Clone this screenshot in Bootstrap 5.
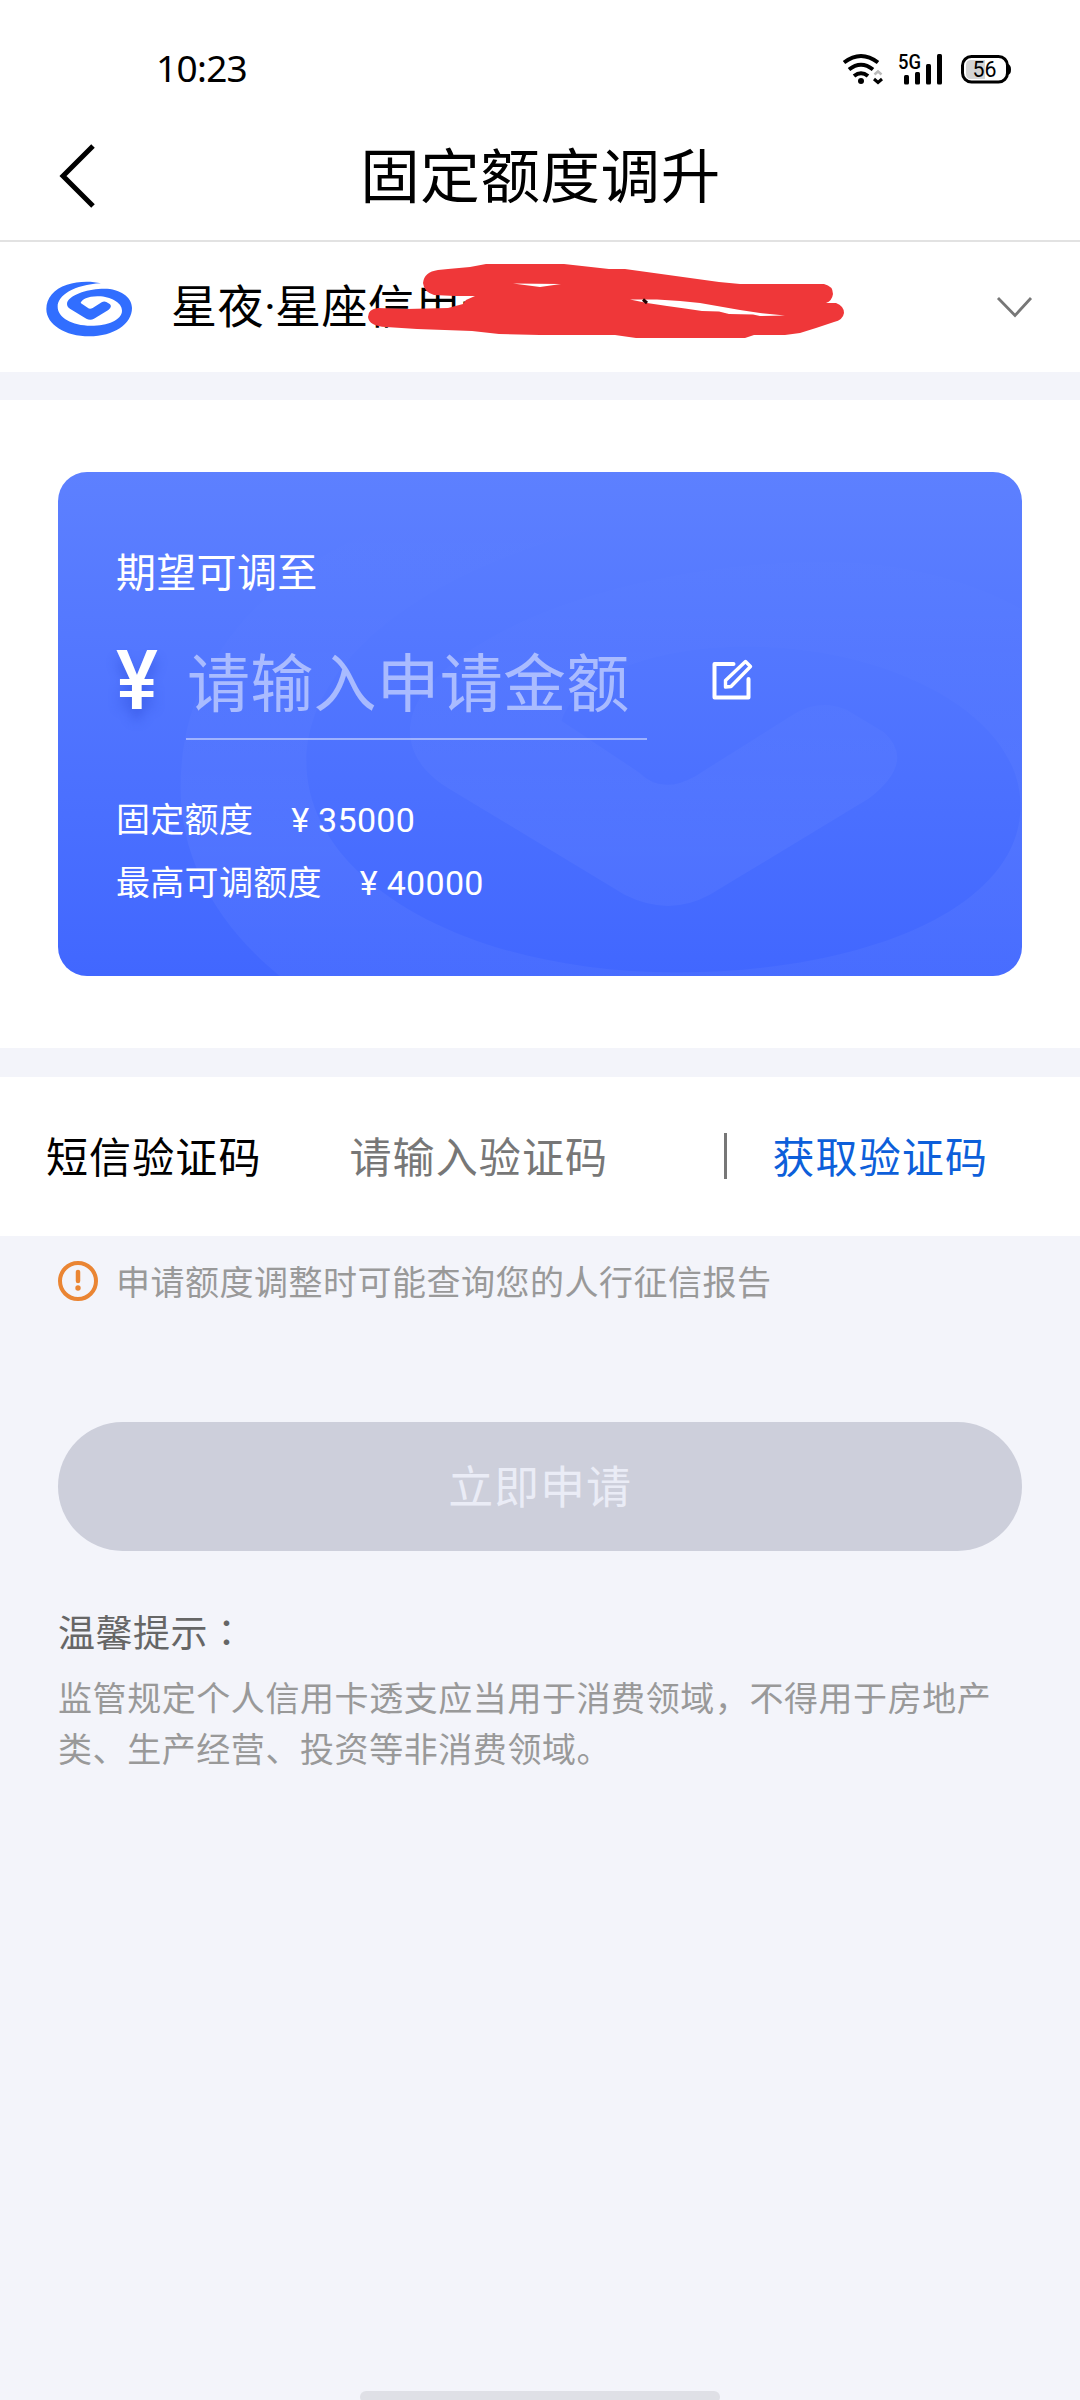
<!DOCTYPE html>
<html lang="zh-CN">
<head>
<meta charset="utf-8">
<meta name="viewport" content="width=device-width, initial-scale=1">
<title>固定额度调升</title>
<link rel="stylesheet" href="https://cdn.jsdelivr.net/npm/bootstrap@5.3.0/dist/css/bootstrap.min.css">
<style>
  body { font-family: Roboto, "Noto Sans CJK SC", sans-serif; background: #f3f4fa; color: #000; line-height: 1; }
  .screen { width: 1080px; height: 2400px; overflow: hidden; }
  .screen svg { display: block; flex: none; }
  .cjk { font-family: "Noto Sans CJK SC", sans-serif; white-space: nowrap; }
  .status-bar { height: 100px; padding: 0 68px 0 156px; }
  .clock { font: 37px/1 "Noto Sans", sans-serif; letter-spacing: -.7px; margin-top: 49px; }
  .title-bar { height: 142px; border-bottom: 2px solid #e2e2e2; padding: 11px 58px 0 59px; }
  .title-text { font-size: 59.5px; letter-spacing: .6px; line-height: 72px; padding-bottom: 7px; }
  .title-side { width: 40px; }
  .picker { height: 130px; padding: 0 47px 0 46px; }
  .picker-name { font-size: 46px; letter-spacing: .5px; margin-left: 38px; line-height: 60px; padding-bottom: 4px; }
  .picker-name .dot { font-family: Roboto, sans-serif; display: inline-block; width: 11px; text-align: center; letter-spacing: 0; }
  .redaction { left: 360px; top: 16px; }
  .strip { height: 28px; }
  .quota-wrap { height: 648px; padding: 72px 58px; }
  .quota { height: 504px; border-radius: 29px; overflow: hidden; background: linear-gradient(#5d80ff, #4167ff); padding: 70px 58px 0; color: #fff; }
  .quota-bg { left: -55px; top: -221px; }
  .quota-label { font-size: 40px; letter-spacing: .3px; line-height: 56px; }
  .amount { height: 112px; margin-top: 32px; }
  .yen { font: 500 83px/1 Roboto, sans-serif; width: 70px; padding-top: 9px; text-shadow: 0 10px 12px rgba(40,70,210,.45); }
  .yen span { display: inline-block; transform: scaleX(.95); transform-origin: 0 50%; }
  .amount-field { width: 461px; height: 110px; border-bottom: 2px solid rgba(255,255,255,.45); font-size: 63px; line-height: 98px; letter-spacing: .2px; color: rgba(255,255,255,.5); padding-left: 1px; }
  .amount-edit { margin: 27px 0 0 63px; }
  .limits { margin-top: 44px; font-size: 34px; letter-spacing: .3px; }
  .limits > div { height: 63px; line-height: 63px; }
  .limits .value { font-family: Roboto, sans-serif; margin-left: 38px; letter-spacing: .3px; }
  .sms { height: 159px; font-size: 42px; letter-spacing: 1.1px; padding: 0 46px; }
  .sms > .sms-item { padding-bottom: 4px; }
  .sms-field { width: 374px; margin-left: 88px; color: #777; }
  .sms-line { width: 3px; height: 46px; background: #777; margin-bottom: 2px; }
  .sms-link { color: #0d5fda; margin-left: 46px; }
  .notice { height: 90px; padding: 0 58px; color: #999; font-size: 34px; letter-spacing: .5px; }
  .apply { height: 129px; margin: 96px 58px 0; padding-bottom: 5px; border-radius: 65px; background: #cdcfdb; color: #eaecf6; font-size: 45px; letter-spacing: .9px; }
  .tips { padding: 52px 58px 0; }
  .tips-title { font-size: 37px; letter-spacing: .5px; line-height: 56px; color: #666; }
  .tips-title span { font-family: "Noto Sans CJK TC", sans-serif; }
  .tips-text { font-size: 34px; letter-spacing: .57px; line-height: 51px; color: #999; margin-top: 12px; }
  .home-bar { width: 360px; height: 12px; border-radius: 6px; background: #dfe0e6; margin-bottom: -3px; }
</style>
<script src="https://cdn.jsdelivr.net/npm/bootstrap@5.3.0/dist/js/bootstrap.bundle.min.js"></script>
</head>
<body>
<svg width="0" height="0" class="position-absolute">
  <linearGradient id="fade" x1="0" y1="0" x2="0" y2="1">
    <stop offset="0" stop-color="#fff" stop-opacity="0"/><stop offset=".3" stop-color="#fff" stop-opacity=".012"/><stop offset=".6" stop-color="#fff" stop-opacity=".045"/><stop offset="1" stop-color="#fff" stop-opacity=".03"/>
  </linearGradient>
  <symbol id="swirl" viewBox="0 0 360 300">
    <path d="M212,68C180,60 140,62 110,72C70,85 48,112 48,145C48,192 105,227 177,227C250,227 305,190 305,142C305,108 268,84 222,84C175,84 125,100 112,122C107,132 112,140 120,145L168,174Q180,180 191,174L234,148Q247,138 238,130L228,124Q221,121 214,125L187,142Q178,147 172,141L151,127C154,116 175,106 205,107C240,108 275,125 275,150C275,178 232,195 182,195C125,195 82,170 82,138C82,105 130,72 212,68Z"/>
  </symbol>
</svg>
<main class="screen d-flex flex-column">
  <header class="bg-white">
    <div class="status-bar d-flex align-items-start justify-content-between">
      <div class="clock">10:23</div>
      <svg class="status-icons" width="176" height="100" viewBox="836 0 176 100">
        <g fill="none" stroke="#000" stroke-width="4">
          <path d="M844 62.500Q861 49.500 878 62.500M849 69.500Q861 60 873 69.500M854 76Q861 70.500 868 76"/>
          <path d="M874.500 74.500L878 71.500L881.500 74.500" stroke="#bbb" stroke-width="2.500"/>
          <path d="M874 79L878 82.500L882 79" stroke-width="3"/>
          <rect x="962.500" y="56.500" width="45" height="25.500" rx="9" stroke-width="3"/>
        </g>
        <circle cx="861" cy="81" r="3"/>
        <g fill="#000">
          <rect x="904" y="75" width="5" height="9.500" rx="1.500"/><rect x="915" y="72" width="5" height="12.500" rx="1.500"/>
          <rect x="926" y="64" width="5" height="20.500" rx="1.500"/><rect x="937" y="54" width="5" height="30.500" rx="1.500"/>
          <path d="M1008 64Q1011 65 1011 69.500Q1011 74 1008 75Z"/>
        </g>
        <path d="M971 60H985V79H971Q966 79 966 74V65Q966 60 971 60Z" fill="#d4d4d4"/>
        <text x="898" y="69" font-family="Roboto" font-weight="500" font-size="20" textLength="23" lengthAdjust="spacingAndGlyphs">5G</text>
        <text x="972.500" y="77" font-family="Roboto" font-size="21.500" textLength="24" lengthAdjust="spacingAndGlyphs">56</text>
      </svg>
    </div>
    <div class="title-bar d-flex align-items-center justify-content-between">
      <svg class="title-side" width="40" height="66" viewBox="0 0 40 66"><path d="M34 3L4 33L34 63" fill="none" stroke="#000" stroke-width="5"/></svg>
      <h1 class="title-text cjk fw-normal mb-0">固定额度调升</h1>
      <div class="title-side"></div>
    </div>
  </header>
  <section class="picker bg-white d-flex align-items-center position-relative">
    <svg class="mt-1" width="87" height="56" viewBox="47 61 261 168" fill="#316eff"><use href="#swirl" width="360" height="300"/></svg>
    <div class="picker-name cjk">星夜<span class="dot">·</span>星座信用卡</div>
    <svg class="ms-auto" width="37" height="24" viewBox="0 0 37 24"><path d="M2 3L19 20.500L35 3" fill="none" stroke="#777" stroke-width="2.800"/></svg>
    <svg class="redaction position-absolute" width="490" height="90" viewBox="360 258 490 90">
      <path fill="#ef3739" fill-rule="evenodd" d="M423 283Q424 272 438 270L448 269L470 267L486 264H564L609 269H625L719 282L740 284H824Q833 286 833 294Q832 301 826 303H836Q844 306 844 313Q843 320 834 322L816 328L800 333L785 335H754L745 338H636L615 335H540L499 334L472 331L417 329L386 327Q369 326 368 317Q368 309 378 308L406 309L448 308L463 304L466 300L475 296H455L434 295Q424 292 423 283ZM513 283.500L540 287L561 284ZM630 299.500L647 303L667 306L685 308.500L702 311L719 311.500L729 314L753 314.500L760 316L785 315.500L760 313L740 310L700 303L680 301L657 299.500Z"/>
      <path d="M643 299.500L647 303" stroke="#200" stroke-width="3"/>
    </svg>
  </section>
  <div class="strip"></div>
  <section class="quota-wrap bg-white">
    <div class="quota position-relative">
      <svg class="quota-bg position-absolute" width="1332" height="1110" fill="url(#fade)"><use href="#swirl" width="1332" height="1110"/></svg>
      <div class="position-relative">
        <div class="quota-label cjk">期望可调至</div>
        <div class="amount d-flex align-items-start">
          <div class="yen"><span>¥</span></div>
          <div class="amount-field cjk">请输入申请金额</div>
          <svg class="amount-edit" width="46" height="46" viewBox="0 0 46 46" fill="none" stroke="#fff" stroke-width="4" stroke-linecap="round" stroke-linejoin="round"><path d="M23.500 7H4.500V40.500H38.500V22"/><path d="M15.500 30V23.500L35.500 4.500L40.500 9.500L21 29.500Z" stroke-width="3.400"/></svg>
        </div>
        <div class="limits cjk">
          <div>固定额度<span class="value">¥ 35000</span></div>
          <div>最高可调额度<span class="value">¥ 40000</span></div>
        </div>
      </div>
    </div>
  </section>
  <div class="strip flex-shrink-0" style="height:29px"></div>
  <section class="sms cjk bg-white d-flex align-items-center">
    <div class="sms-item">短信验证码</div>
    <div class="sms-item sms-field">请输入验证码</div>
    <div class="sms-line"></div>
    <div class="sms-item sms-link">获取验证码</div>
  </section>
  <div class="notice cjk d-flex align-items-center">
    <svg width="40" height="40" viewBox="0 0 40 40"><circle cx="20" cy="20" r="18" fill="none" stroke="#ea8533" stroke-width="4"/><path d="M20 11V20" stroke="#ea8533" stroke-width="4.500" stroke-linecap="round"/><circle cx="20" cy="27" r="2.700" fill="#ea8533"/></svg>
    <span style="margin-left:18px">申请额度调整时可能查询您的人行征信报告</span>
  </div>
  <div class="apply cjk d-flex align-items-center justify-content-center">立即申请</div>
  <section class="tips">
    <div class="tips-title cjk">温馨提示<span lang="zh-TW">：</span></div>
    <p class="tips-text cjk text-wrap mb-0">监管规定个人信用卡透支应当用于消费领域，不得用于房地产类、生产经营、投资等非消费领域。</p>
  </section>
  <div class="home-bar mt-auto align-self-center"></div>
</main>
</body>
</html>
